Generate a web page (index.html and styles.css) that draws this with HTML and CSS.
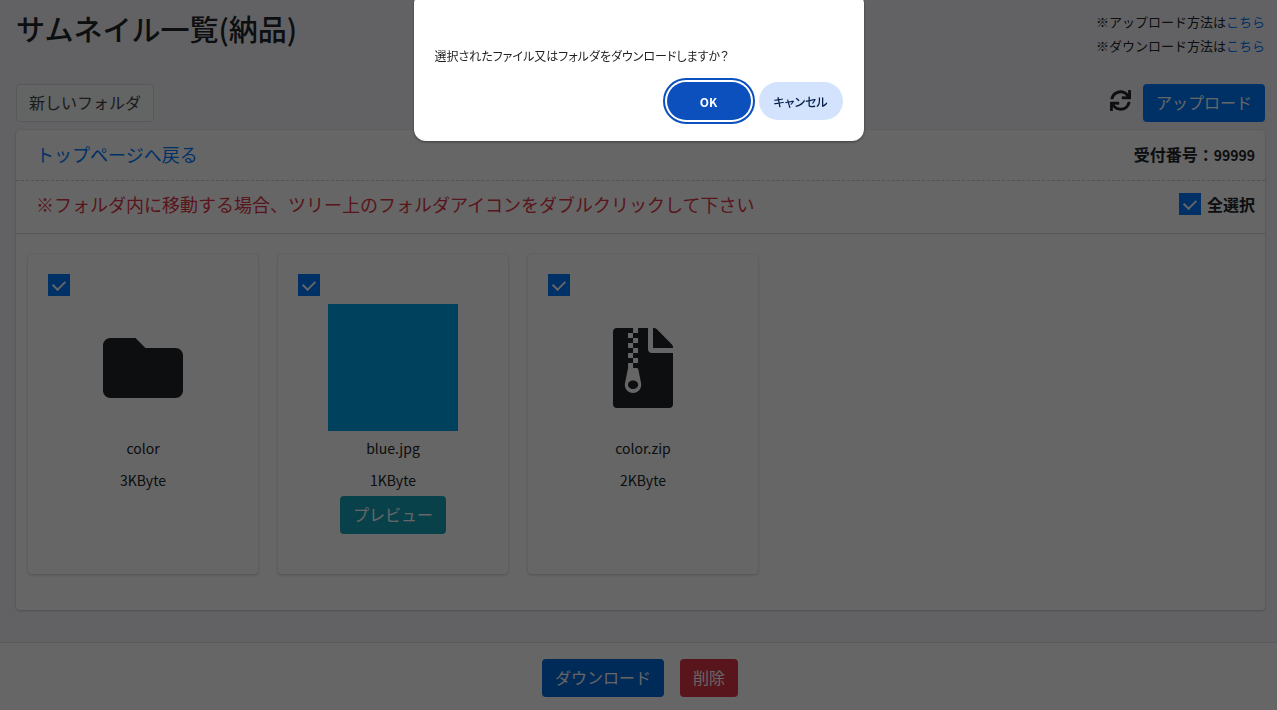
FILE: index.html
```html
<!DOCTYPE html>
<html lang="ja">
<head>
  <meta charset="UTF-8">
  <meta name="viewport" content="width=device-width, initial-scale=1.0">
  <title>サムネイル一覧(納品)</title>
  <link rel="stylesheet" href="styles.css">
</head>
<body>
<div class="wrapper">
  <header class="content-header">
    <h1>サムネイル一覧(納品)</h1>
    <div class="help">
      <p>※アップロード方法は<a href="#">こちら</a></p>
      <p>※ダウンロード方法は<a href="#">こちら</a></p>
    </div>
  </header>

  <main class="content">
    <div class="toolbar">
      <button type="button" class="btn btn-default">新しいフォルダ</button>
      <div class="toolbar-right">
        <button type="button" class="btn-icon" aria-label="更新">
          <svg width="21" height="21" viewBox="0 0 512 512" fill="currentColor"><path d="M440.65 12.57l4 82.77A247.16 247.16 0 0 0 255.83 8C134.73 8 33.91 94.92 12.29 209.82A12 12 0 0 0 24.09 224h49.05a12 12 0 0 0 11.67-9.26 175.91 175.91 0 0 1 317-56.94l-101.46-4.86a12 12 0 0 0-12.57 12v47.41a12 12 0 0 0 12 12H500a12 12 0 0 0 12-12V12a12 12 0 0 0-12-12h-47.37a12 12 0 0 0-11.98 12.57zM255.83 432a175.61 175.61 0 0 1-146-77.8l101.8 4.87a12 12 0 0 0 12.57-12v-47.4a12 12 0 0 0-12-12H12a12 12 0 0 0-12 12V500a12 12 0 0 0 12 12h47.35a12 12 0 0 0 12-12.6l-4.15-82.57A247.17 247.17 0 0 0 255.83 504c121.11 0 221.93-86.92 243.55-201.82a12 12 0 0 0-11.8-14.18h-49.05a12 12 0 0 0-11.67 9.26A175.86 175.86 0 0 1 255.83 432z"/></svg>
        </button>
        <button type="button" class="btn btn-primary">アップロード</button>
      </div>
    </div>

    <section class="card">
      <div class="card-row card-row-dashed">
        <a href="#" class="back">トップページへ戻る</a>
        <strong>受付番号：<span class="number">99999</span></strong>
      </div>
      <div class="card-row">
        <p class="notice">※フォルダ内に移動する場合、ツリー上のフォルダアイコンをダブルクリックして下さい</p>
        <label class="check-all"><input type="checkbox" class="check" checked>全選択</label>
      </div>

      <div class="thumbs">
        <div class="thumb">
          <input type="checkbox" class="check" aria-label="color" checked>
          <div class="thumb-media">
            <svg width="80" height="80" viewBox="0 0 512 512" fill="currentColor"><path d="M464 128H272l-64-64H48C21.49 64 0 85.49 0 112v288c0 26.51 21.49 48 48 48h416c26.51 0 48-21.49 48-48V176c0-26.51-21.49-48-48-48z"/></svg>
          </div>
          <p>color</p>
          <p>3KByte</p>
        </div>
        <div class="thumb">
          <input type="checkbox" class="check" aria-label="blue.jpg" checked>
          <div class="thumb-media">
            <div class="swatch"></div>
          </div>
          <p>blue.jpg</p>
          <p>1KByte</p>
          <button type="button" class="btn btn-info">プレビュー</button>
        </div>
        <div class="thumb">
          <input type="checkbox" class="check" aria-label="color.zip" checked>
          <div class="thumb-media">
            <svg width="60" height="80" viewBox="0 0 384 512" fill="currentColor"><path d="M377 105L279.1 7c-4.5-4.5-10.6-7-17-7H256v128h128v-6.1c0-6.3-2.5-12.4-7-16.9zM128.4 336c-17.9 0-32.4 12.1-32.4 27 0 15 14.6 27 32.5 27s32.4-12.1 32.4-27-14.6-27-32.5-27zM224 136V0h-63.6v32h-32V0H24C10.7 0 0 10.7 0 24v464c0 13.3 10.7 24 24 24h336c13.3 0 24-10.7 24-24V160H248c-13.2 0-24-10.8-24-24zM95.9 32h32v32h-32zm32.3 384c-33.2 0-58-30.4-51.4-62.9L96.4 256v-32h32v-32h-32v-32h32v-32h-32V96h32V64h32v32h-32v32h32v32h-32v32h32v32h-32v32h22.1c5.7 0 10.7 4.1 11.8 9.7l17.3 87.7c6.4 32.4-18.4 62.6-51.5 62.6z"/></svg>
          </div>
          <p>color.zip</p>
          <p>2KByte</p>
        </div>
      </div>
    </section>
  </main>

  <footer class="main-footer">
    <button type="button" class="btn btn-download">ダウンロード</button>
    <button type="button" class="btn btn-danger">削除</button>
  </footer>
</div>

<!-- Confirm -->
<div class="backdrop">
  <dialog class="confirm" open>
    <p>選択されたファイル又はフォルダをダウンロードしますか？</p>
    <div class="confirm-buttons">
      <button type="button" class="pill pill-ok">OK</button>
      <button type="button" class="pill pill-cancel">キャンセル</button>
    </div>
  </dialog>
</div>
</body>
</html>
```

FILE: styles.css
```css
* {
  box-sizing: border-box;
}

body {
  margin: 0;
  background: #f4f6f9;
  color: #212529;
  font-family: "Noto Sans CJK JP", sans-serif;
  font-size: 16px;
  line-height: 24px;
}

p, h1 {
  margin: 0;
}

a {
  color: #007bff;
  text-decoration: none;
}
a:hover {
  color: #0056b3;
}

button {
  font-family: inherit;
  cursor: pointer;
}

.wrapper {
  display: flex;
  flex-direction: column;
  min-height: 100vh;
}

.content-header {
  display: flex;
  justify-content: space-between;
  align-items: flex-start;
  padding: 10px 12px 26px 16px;
}
.content-header h1 {
  font-size: 29px;
  font-weight: 500;
  line-height: 36px;
}

.help {
  font-size: 13px;
}

.content {
  flex: 1;
  padding: 0 12px 31px 16px;
}

.toolbar {
  display: flex;
  justify-content: space-between;
  margin-bottom: 8px;
}
.toolbar-right {
  display: flex;
  align-items: flex-start;
  gap: 12px;
}

.btn {
  padding: 5px 12px 7px;
  border: 1px solid transparent;
  border-radius: 4px;
  color: #fff;
  font-size: 16px;
  line-height: 24px;
}
.btn-default {
  background: #f8f9fa;
  border-color: #ddd;
  color: #444;
}
.btn-primary {
  background: #007bff;
}
.btn-download {
  background: #0069d9;
}
.btn-info {
  background: #17a2b8;
}
.btn-danger {
  background: #dc3545;
}
.btn-icon {
  padding: 6px 0;
  border: none;
  background: none;
  color: inherit;
}
.btn-icon svg {
  display: block;
}

.card {
  background: #fff;
  border-radius: 4px;
  box-shadow: 0 0 1px rgba(0, 0, 0, .125), 0 1px 3px rgba(0, 0, 0, .2);
}

.card-row {
  display: flex;
  justify-content: space-between;
  align-items: center;
  padding: 11px 10px 17px 20px;
  border-bottom: 1px solid #d6d8da;
}
.card-row-dashed {
  padding: 12px 10px 14px 20px;
  border-bottom: 1px dashed #ccc;
}

.back, .notice {
  font-size: 18px;
}
.notice {
  color: #dc3545;
}

.number {
  font-size: 14px;
  line-height: 16px;
}

.check-all {
  display: flex;
  align-items: center;
  gap: 6px;
  font-weight: 700;
}

.check {
  appearance: none;
  display: grid;
  place-content: center;
  width: 22px;
  height: 22px;
  margin: 0;
  border: 1px solid #007bff;
  background: #fff;
}
.check:checked {
  background: #007bff;
}
.check:checked::after {
  content: "";
  width: 6px;
  height: 10px;
  margin-bottom: 3px;
  border: solid #fff;
  border-width: 0 2px 2px 0;
  transform: rotate(45deg);
}

.thumbs {
  display: flex;
  flex-wrap: wrap;
  gap: 20px;
  padding: 20px 12px 36px;
}

.thumb {
  display: flex;
  flex-direction: column;
  align-items: center;
  width: 230px;
  min-height: 320px;
  padding: 20px;
  border-radius: 4px;
  box-shadow: 0 0 1px rgba(0, 0, 0, .125), 0 1px 3px rgba(0, 0, 0, .2);
  font-size: 14px;
  line-height: 32px;
}
.thumb .check {
  align-self: flex-start;
  margin-bottom: 8px;
}

.thumb-media {
  display: grid;
  place-items: center;
  height: 127px;
  margin-bottom: 1px;
}

.swatch {
  width: 130px;
  height: 127px;
  background: #00a2e8;
}

.main-footer {
  display: flex;
  justify-content: center;
  gap: 16px;
  padding: 16px 13px 13px 16px;
  border-top: 1px solid #dee2e6;
  background: #fff;
}

.backdrop {
  position: fixed;
  inset: 0;
  background: rgba(0, 0, 0, .6);
}

.confirm {
  position: absolute;
  top: -8px;
  width: 450px;
  padding: 52px 21px 21px;
  border: none;
  border-radius: 12px;
  background: #fff;
  color: #1f1f1f;
  box-shadow: 0 1px 3px rgba(0, 0, 0, .4);
}
.confirm p {
  font-size: 12px;
  font-feature-settings: "palt";
}

.confirm-buttons {
  display: flex;
  justify-content: flex-end;
  gap: 8px;
  margin-top: 14px;
}

.pill {
  width: 84px;
  height: 38px;
  padding: 0;
  border: none;
  border-radius: 19px;
  font-size: 12px;
  font-weight: 700;
}
.pill-ok {
  background: #0b50bd;
  color: #fff;
  outline: 2px solid #0b50bd;
  outline-offset: 2px;
}
.pill-cancel {
  background: #d3e3fd;
  color: #041e49;
  font-weight: 500;
  font-feature-settings: "palt";
}
```
